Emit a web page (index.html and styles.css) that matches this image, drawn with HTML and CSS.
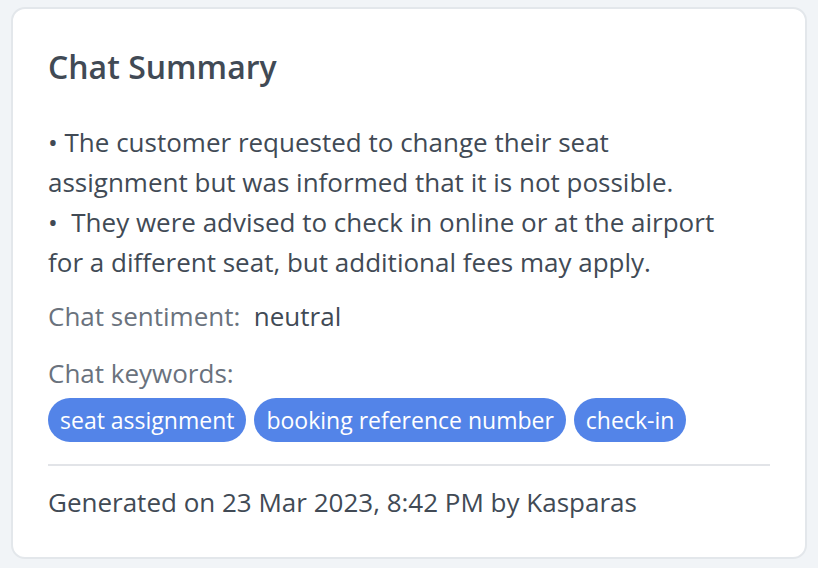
FILE: index.html
```html
<!DOCTYPE html>
<html lang="en">
<head>
<meta charset="utf-8">
<title>Chat Summary</title>
<link rel="stylesheet" href="styles.css">
</head>
<body>
<div class="card">
  <h2 class="title">Chat Summary</h2>
  <p class="summary">• The customer requested to change their seat<br>assignment but was informed that it is not possible.<br>•&nbsp; They were advised to check in online or at the airport<br>for a different seat, but additional fees may apply.</p>
  <div class="row"><span class="label">Chat sentiment:</span>&nbsp; <span class="value">neutral</span></div>
  <div class="label kw-label">Chat keywords:</div>
  <div class="chips">
    <span class="chip">seat assignment</span>
    <span class="chip">booking reference number</span>
    <span class="chip">check-in</span>
  </div>
  <div class="footer">Generated on 23 Mar 2023, 8:42 PM by Kasparas</div>
</div>
</body>
</html>
```
FILE: styles.css
```css
html, body { margin: 0; padding: 0; }
body {
  background: #f1f4f7;
  font-family: "Open Sans", "Noto Sans", sans-serif;
  color: #414a55;
  padding: 7px 11px 9px 11px;
}
.card {
  box-sizing: border-box;
  background: #fff;
  border: 2px solid #e3e7eb;
  border-radius: 14px;
  padding: 38px 35px 32px 35px;
  width: 796px;
  height: 552px;
}
.title {
  margin: 0;
  font-size: 32px;
  font-weight: 600;
  line-height: 40px;
  color: #414a55;
}
.summary {
  margin: 35px 0 0 0;
  font-size: 26px;
  line-height: 40px;
  white-space: nowrap;
}
.row { margin-top: 14px; font-size: 26px; line-height: 40px; }
.label { color: #6a727d; }
.kw-label { margin-top: 17px; font-size: 26px; line-height: 40px; }
.chips { display: flex; gap: 8px; margin-top: 5px; }
.chip {
  background: #5384e8;
  color: #fff;
  font-size: 23px;
  line-height: 44px;
  height: 44px;
  padding: 0 12px;
  border-radius: 22px;
}
.footer {
  margin-top: 22px;
  border-top: 2px solid #e2e4e8;
  padding-top: 16px;
  font-size: 26px;
  line-height: 40px;
}
```
